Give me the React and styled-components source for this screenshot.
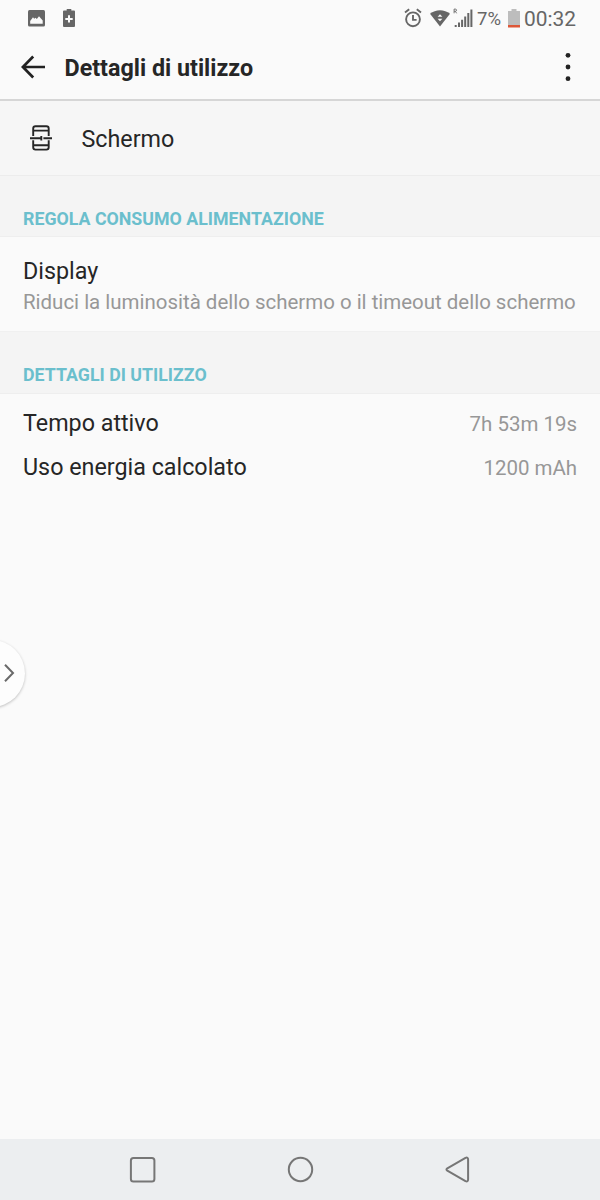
import React from 'react';
import styled, { createGlobalStyle } from 'styled-components';

const GlobalStyle = createGlobalStyle`
    * {
      box-sizing: border-box;
    }

    body {
      margin: 0;
      background: #fafafa;
      font-family: Roboto, "Liberation Sans", sans-serif;
      color: #262626;
    }`;

const Screen = styled.div`
    position: relative;
    display: flex;
    flex-direction: column;
    width: 600px;
    height: 1200px;
    overflow: hidden;
    background: #fafafa;`;

const StatusBar = styled.div`
    display: flex;
    justify-content: space-between;
    height: 37px;
    padding: 0 24px 0 28px;
    color: #666;`;

const StatusGroup = styled.div`
    display: flex;
    align-items: center;
    height: 36px;`;

const StatusText = styled.span`
    margin-left: ${props => props.$gap}px;
    padding-top: 2px;
    font-size: ${props => props.$size}px;
    line-height: 24px;
    white-space: nowrap;`;

const Icon = styled.svg`
    display: block;
    flex: none;
    margin-left: ${props => props.$gap || 0}px;`;

const Toolbar = styled.header`
    display: flex;
    align-items: center;
    height: 64px;
    padding: 0 27px 2px 20px;
    border-bottom: 2px solid #d6d6d6;`;

const Title = styled.h1`
    flex: 1;
    margin: 0 0 0 18.5px;
    padding-top: 2px;
    font-size: 23.3px;
    line-height: 28px;
    font-weight: 700;`;

const Entry = styled.div`
    display: flex;
    align-items: center;
    height: 75px;
    padding: 0 0 0 29px;
    background: #f6f6f6;
    border-bottom: 1px solid #ececec;`;

const EntryName = styled.span`
    margin-left: 28.5px;
    padding-top: 2px;
    font-size: 23.3px;
    line-height: 28px;`;

const SectionHeader = styled.h2`
    height: ${props => props.$height}px;
    margin: 0;
    padding: 31px 24px 0 23px;
    background: #f4f4f4;
    border-bottom: 1px solid #eeeeee;
    color: #6bbfcd;
    font-size: 17.8px;
    line-height: 24px;
    font-weight: 700;`;

const Preference = styled.div`
    height: 95px;
    padding: 20px 23px 0;
    border-bottom: 1px solid #f0f0f0;`;

const Label = styled.div`
    font-size: 23.3px;
    line-height: 28px;
    white-space: nowrap;`;

const Summary = styled.div`
    margin-top: 4px;
    color: #979797;
    font-size: 20.470px;
    line-height: 26px;
    white-space: nowrap;`;

const Details = styled.div`
    flex: 1;
    padding: 7px 23px 0;`;

const DetailRow = styled.div`
    display: flex;
    align-items: center;
    justify-content: space-between;
    height: 44px;`;

const Value = styled.span`
    padding-top: 2px;
    color: #979797;
    font-size: 20.470px;
    line-height: 26px;`;

const NavBar = styled.nav`
    display: flex;
    justify-content: space-between;
    align-items: center;
    height: 61px;
    padding: 0 129px;
    background: #eceef0;`;

const EdgeHandle = styled.div`
    position: absolute;
    left: -42px;
    top: 640px;
    display: flex;
    align-items: center;
    justify-content: flex-end;
    width: 67px;
    height: 67px;
    padding: 0 10px 1px 0;
    border-radius: 50%;
    background: #fdfdfd;
    box-shadow: 0 1px 3px rgba(0, 0, 0, 0.24);`;

const details = [
    { name: 'Tempo attivo', value: '7h 53m 19s' },
    { name: 'Uso energia calcolato', value: '1200 mAh' },
]

function PictureIcon() {
    return (
        <Icon width="17" height="17" viewBox="0 0 17 17">
            <rect width="17" height="16.5" rx="1.5" fill="#666" />
            <path d="M2.200 13.700V11L5 7.200l1.200 1.500 1.300-1 1.300 1.300L11 6.200l3.700 4.400v3.100z" fill="#fafafa" />
        </Icon>
    )
}

function BatteryPlusIcon() {
    return (
        <Icon $gap={18} width="12" height="18" viewBox="0 0 12 18">
            <path d="M3.700 0h4.600v1.600H11a1 1 0 0 1 1 1V17a1 1 0 0 1-1 1H1a1 1 0 0 1-1-1V2.600a1 1 0 0 1 1-1h2.700z" fill="#666" />
            <path d="M6 6.200v7.400M2.300 9.900h7.400" stroke="#fafafa" strokeWidth="2" />
        </Icon>
    )
}

function AlarmIcon() {
    return (
        <Icon width="18" height="20" viewBox="0 0 18 20" fill="none" stroke="#666" strokeWidth="1.900">
            <circle cx="9" cy="11.300" r="6.900" />
            <path d="M1 4.600 5.200 1.300M17 4.600l-4.200-3.300M9 7v4.900h3.600" />
        </Icon>
    )
}

function WifiIcon() {
    return (
        <Icon $gap={8} width="20" height="17" viewBox="0 0 20 17">
            <path d="M0 3.800C5.600-.9 14.400-.9 20 3.800L10 16.500z" fill="#666" />
            <path d="M7.600 6.700 10 4.200l2.400 2.500zM7.600 8.700h4.800L10 11.200z" fill="#fafafa" />
        </Icon>
    )
}

function SignalIcon() {
    return (
        <Icon $gap={3} width="20" height="20" viewBox="0 0 20 20">
            <path d="M1.100 5.300V1.100h1.300a1.100 1.100 0 0 1 0 2.200H1.100M2.400 3.300l1.200 2" fill="none" stroke="#666" strokeWidth=".9" />
            <path d="M2.700 19v-2M6 19v-4.500M9.100 19v-7.300M12.200 19V8.500M15.300 19V5M18.400 19V1.500" stroke="#666" strokeWidth="2" />
        </Icon>
    )
}

function BatteryIcon() {
    return (
        <Icon $gap={7} width="12" height="19" viewBox="0 0 12 19">
            <path d="M3.500 0h5v2H12v14H0V2h3.500z" fill="#bdbdbd" />
            <path d="M0 16h12v2.500H0z" fill="#dd5738" />
        </Icon>
    )
}

function BackIcon() {
    return (
        <Icon width="26" height="24" viewBox="0 0 26 24" fill="none" stroke="#222" strokeWidth="2.700">
            <path d="M25 12H3M13.200 1.500 2.900 12l10.300 10.500" />
        </Icon>
    )
}

function MoreIcon() {
    return (
        <Icon width="10" height="30" viewBox="0 0 10 30" fill="#222">
            <circle cx="5" cy="3.300" r="2.400" />
            <circle cx="5" cy="15" r="2.400" />
            <circle cx="5" cy="26.700" r="2.400" />
        </Icon>
    )
}

function DisplayIcon() {
    return (
        <Icon width="24" height="26" viewBox="0 0 24 26" fill="none" stroke="#262626" strokeWidth="1.900">
            <path d="M4.200 11V3.500q0-2.300 2.300-2.300h10.900q2.300 0 2.300 2.300V11M4.200 15.300v7q0 2.300 2.300 2.300h10.900q2.300 0 2.300-2.300v-7M4.200 5.600h15.500M4.200 20.200h15.500" />
            <path d="M1 13.200h11M14.400 13.200H23M12.300 11v4.400" />
        </Icon>
    )
}

export default function App() {
    return (
        <Screen>
            <GlobalStyle />
            <StatusBar>
                <StatusGroup>
                    <PictureIcon />
                    <BatteryPlusIcon />
                </StatusGroup>
                <StatusGroup>
                    <AlarmIcon />
                    <WifiIcon />
                    <SignalIcon />
                    <StatusText $gap={4} $size={18.500}>7%</StatusText>
                    <BatteryIcon />
                    <StatusText $gap={4} $size={20.900}>00:32</StatusText>
                </StatusGroup>
            </StatusBar>
            <Toolbar>
                <BackIcon />
                <Title>Dettagli di utilizzo</Title>
                <MoreIcon />
            </Toolbar>
            <Entry>
                <DisplayIcon />
                <EntryName>Schermo</EntryName>
            </Entry>
            <SectionHeader $height={61}>REGOLA CONSUMO ALIMENTAZIONE</SectionHeader>
            <Preference>
                <Label>Display</Label>
                <Summary>Riduci la luminosità dello schermo o il timeout dello schermo</Summary>
            </Preference>
            <SectionHeader $height={62}>DETTAGLI DI UTILIZZO</SectionHeader>
            <Details>
                {details.map(row => (
                    <DetailRow key={row.name}>
                        <Label>{row.name}</Label>
                        <Value>{row.value}</Value>
                    </DetailRow>
                ))}
            </Details>
            <NavBar>
                <Icon width="27" height="27" viewBox="0 0 27 27" fill="none" stroke="#767676" strokeWidth="2">
                    <rect x="1.900" y="1.900" width="23.500" height="23.500" rx="2.500" />
                </Icon>
                <Icon width="27" height="27" viewBox="0 0 27 27" fill="none" stroke="#767676" strokeWidth="2">
                    <circle cx="13.500" cy="13.500" r="11.700" />
                </Icon>
                <Icon width="27" height="27" viewBox="0 0 27 27" fill="none" stroke="#767676" strokeWidth="2" strokeLinejoin="round">
                    <path d="M3.300 12.300 21.500 1.900q2.600-1 2.600 1.500v20.200q0 2.500-2.600 1.500L3.300 14.700q-1.700-1.200 0-2.400z" />
                </Icon>
            </NavBar>
            <EdgeHandle>
                <Icon width="12" height="20" viewBox="0 0 12 20" fill="none" stroke="#6a6a6a" strokeWidth="2">
                    <path d="m2 1.700 8 8.300-8 8.300" />
                </Icon>
            </EdgeHandle>
        </Screen>
    )
}
